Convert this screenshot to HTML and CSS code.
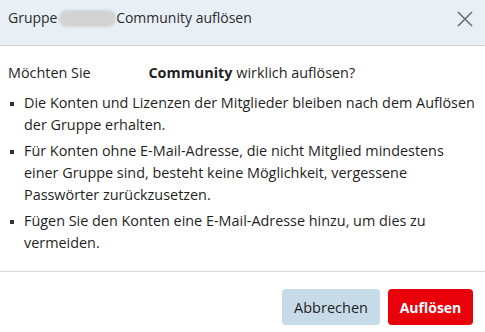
FILE: index.html
```html
<!DOCTYPE html>
<html lang="de">
<head>
<meta charset="utf-8">
<title>Gruppe auflösen</title>
<link rel="stylesheet" href="styles.css">
</head>
<body>
<div class="dialog">
  <header class="dialog-header">
    <h1 class="dialog-title">Gruppe <span class="redacted"></span>Community auflösen</h1>
    <button class="close-btn" aria-label="Schließen">
      <svg width="16" height="16" viewBox="0 0 16 16"><path d="M1 1 L15 15 M15 1 L1 15" stroke="#6f6f6f" stroke-width="1.6" fill="none"/></svg>
    </button>
  </header>
  <section class="dialog-body">
    <p class="question">Möchten Sie <span class="gap"></span><strong>Community</strong> wirklich auflösen?</p>
    <ul class="notes">
      <li>Die Konten und Lizenzen der Mitglieder bleiben nach dem Auflösen der Gruppe erhalten.</li>
      <li>Für Konten ohne E-Mail-Adresse, die nicht Mitglied mindestens einer Gruppe sind, besteht keine Möglichkeit, vergessene Passwörter zurückzusetzen.</li>
      <li>Fügen Sie den Konten eine E-Mail-Adresse hinzu, um dies zu vermeiden.</li>
    </ul>
  </section>
  <footer class="dialog-footer">
    <button class="btn btn-secondary">Abbrechen</button>
    <button class="btn btn-danger">Auflösen</button>
  </footer>
</div>
</body>
</html>
```

FILE: styles.css
```css
* { box-sizing: border-box; }
html, body { margin: 0; padding: 0; background: #fff; }
body {
  font-family: "Open Sans", "Noto Sans", sans-serif;
  font-size: 14.4px;
  color: #1f1f1f;
  width: 485px;
  overflow: hidden;
}
.dialog { width: 485px; }
.dialog-header {
  height: 46px;
  background: #e8eff5;
  border-bottom: 1px solid #d3d8dd;
  display: flex;
  justify-content: space-between;
  align-items: flex-start;
  padding: 8px 12px 0 8px;
}
.dialog-title {
  margin: 0;
  font-size: 14px;
  font-weight: 400;
  line-height: 20px;
  color: #2b2b2b;
}
.redacted {
  display: inline-block;
  width: 57px;
  height: 17px;
  background: #d2d2d2;
  border-radius: 8px;
  vertical-align: -4px;
  filter: blur(1px);
  margin-left: -2px;
}
.close-btn {
  border: 0;
  background: none;
  padding: 0;
  margin-top: 3px;
  width: 16px;
  height: 16px;
  display: flex;
}
.dialog-body {
  padding: 16px 8px 17px 8px;
  border-bottom: 1px solid #d8dce0;
}
.question {
  margin: 0;
  line-height: 22px;
}
.gap { display: inline-block; width: 54px; }
.question strong { font-weight: 700; }
.notes {
  margin: 8px 0 0 0;
  padding: 0 0 0 16px;
  list-style: none;
}
.notes li {
  position: relative;
  line-height: 22px;
  margin-bottom: 4px;
}
.notes li:last-child { margin-bottom: 0; }
.notes li::before {
  content: "";
  position: absolute;
  left: -14px;
  top: 10px;
  width: 4px;
  height: 4px;
  background: #333;
}
.dialog-footer {
  display: flex;
  justify-content: flex-end;
  gap: 8px;
  padding: 17px 12px 8px 12px;
}
.btn {
  height: 36px;
  border: 0;
  border-radius: 4px;
  font-family: inherit;
  font-size: 14.5px;
  padding: 0 8px;
}
.btn-secondary { background: #c6dbe7; color: #1f1f1f; width: 98px; }
.btn-danger { background: #e8000b; color: #fff; font-weight: 700; font-size: 14px; width: 85px; }
```
